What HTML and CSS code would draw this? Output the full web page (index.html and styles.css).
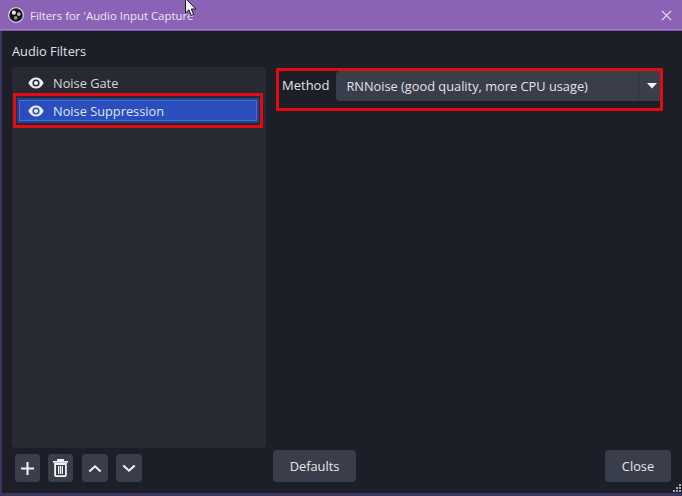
FILE: index.html
```html
<!DOCTYPE html>
<html lang="en">
<head>
<meta charset="utf-8">
<title>Filters</title>
<link rel="stylesheet" href="styles.css">
</head>
<body>
<div class="window">
  <header class="titlebar">
    <svg class="app-logo" viewBox="0 0 18 18"><circle cx="9" cy="9" r="8.2" fill="#15131a" stroke="#e8e4ee" stroke-width="1.2"/><circle cx="6.6" cy="6.400" r="2.400" fill="#e8e4ee"/><circle cx="12.200" cy="8" r="2.100" fill="#b9b4c0"/><circle cx="8.600" cy="12.200" r="2.100" fill="#8f8a96"/></svg>
    <span class="title">Filters for 'Audio Input Capture</span>
    <svg class="win-close" viewBox="0 0 12 12"><path d="M1 1l10 10M11 1L1 11" stroke="#e9e2f3" stroke-width="1.400" fill="none"/></svg>
  </header>
  <main class="content">
    <section class="left">
      <div class="group-label">Audio Filters</div>
      <div class="list">
        <div class="item">
          <svg class="eye" viewBox="0 0 16 12"><path d="M0.300 6C2.400 2.200 5 0.500 8 0.500S13.600 2.200 15.700 6C13.600 9.800 11 11.500 8 11.500S2.400 9.800 0.300 6Z" fill="#eceef2"/><circle cx="8" cy="6" r="3.600" fill="#272a33"/><circle cx="8" cy="6" r="2.100" fill="#eceef2"/></svg>
          <span>Noise Gate</span>
        </div>
        <div class="highlight">
          <div class="item selected">
            <svg class="eye" viewBox="0 0 16 12"><path d="M0.300 6C2.400 2.200 5 0.500 8 0.500S13.600 2.200 15.700 6C13.600 9.800 11 11.500 8 11.500S2.400 9.800 0.300 6Z" fill="#eceef2"/><circle cx="8" cy="6" r="3.600" fill="#2a4fbd"/><circle cx="8" cy="6" r="2.100" fill="#eceef2"/></svg>
            <span>Noise Suppression</span>
          </div>
        </div>
      </div>
      <div class="tools">
        <button class="tool tool-add"><svg viewBox="0 0 16 16"><path d="M8 1v14M1 8h14" stroke="#f2f2f4" stroke-width="2.200" fill="none"/></svg></button>
        <button class="tool tool-del"><svg viewBox="0 0 16 18"><path d="M0.500 2.800h15M5.500 2.800V1h5v1.800" stroke="#f2f2f4" stroke-width="1.800" fill="none"/><path d="M2.600 5h10.800v11a1.200 1.200 0 0 1-1.200 1.200H3.800a1.200 1.200 0 0 1-1.200-1.200Z" stroke="#f2f2f4" stroke-width="1.800" fill="none"/><path d="M6.100 7v8M8 7v8M9.900 7v8" stroke="#f2f2f4" stroke-width="1.200" fill="none"/></svg></button>
        <button class="tool tool-up"><svg viewBox="0 0 16 10"><path d="M1.500 8.500L8 2.500l6.500 6" stroke="#f2f2f4" stroke-width="2.400" fill="none"/></svg></button>
        <button class="tool tool-down"><svg viewBox="0 0 16 10"><path d="M1.500 1.500L8 7.500l6.500-6" stroke="#f2f2f4" stroke-width="2.400" fill="none"/></svg></button>
      </div>
    </section>
    <section class="right">
      <div class="method-row">
        <span class="method-label">Method</span>
        <div class="combo">
          <span class="combo-text">RNNoise (good quality, more CPU usage)</span>
          <span class="combo-arrow"><svg viewBox="0 0 10 6"><path d="M0 0h10L5 5.500Z" fill="#f2f2f4"/></svg></span>
        </div>
      </div>
      <div class="actions">
        <button class="btn">Defaults</button>
        <button class="btn btn-close">Close</button>
      </div>
    </section>
  </main>
  <svg class="grip" viewBox="0 0 9 9"><path d="M6 0h2v2H6zM3 3h2v2H3zM6 3h2v2H6zM0 6h2v2H0zM3 6h2v2H3zM6 6h2v2H6z" fill="#a9abb2"/></svg>
  <svg class="cursor" viewBox="0 0 12 19"><path d="M0.500 0.500V15l3.400-3.200 2.300 5.600 2.500-1-2.400-5.400h4.600Z" fill="#f4f4f6" stroke="#17151c" stroke-width="1"/></svg>
</div>
</body>
</html>
```

FILE: styles.css
```css
* { box-sizing: border-box; }
html, body { margin: 0; padding: 0; }
body { width: 682px; height: 496px; overflow: hidden; background: #1c1f27; font-family: "Open Sans", "Noto Sans", sans-serif; font-size: 12.800px; color: #e6e7ea; }
.window { position: relative; width: 682px; height: 496px; display: flex; flex-direction: column; background: #1c1f27; border-left: 2px solid #3d3560; border-bottom: 3px solid #3d3560; }
.titlebar { height: 31px; margin-left: -2px; flex: none; display: flex; align-items: center; padding: 0 10px 0 8px; background: #8b63b6; border-bottom: 1px solid #8159ad; box-shadow: inset 0 -3px 0 -2px #a07cc6; color: #ece6f3; font-size: 11.400px; }
.app-logo { width: 16px; height: 16px; margin-right: 6px; margin-top: -1px; }
.title { flex: 1; }
.win-close { width: 11px; height: 11px; }
.content { flex: 1; display: flex; padding: 0 11px 11px 10px; gap: 7px; min-height: 0; }
.left { width: 254px; display: flex; flex-direction: column; flex: none; }
.group-label { height: 36px; padding-top: 12px; line-height: 17px; color: #dfe0e4; }
.list { flex: 1; background: #272a33; border-radius: 4px; padding-top: 5px; }
.item { display: flex; align-items: center; height: 21px; padding-left: 16px; gap: 9px; color: #d6d7db; }
.eye { width: 16px; height: 12px; flex: none; }
.highlight { margin: 0 3px 0 1px; height: 35px; border: 3px solid #e40a12; padding: 2px 1px; }
.selected { height: 25px; padding-left: 11px; background: #2a4fbd; box-shadow: inset 2px 2px 0 #243f96, inset -2px -2px 0 #243f96, inset 3px 3px 0 #4a6ccd, inset -3px -3px 0 #4a6ccd; color: #dfe4f4; }
.tools { height: 34px; flex: none; display: flex; align-items: flex-end; padding-left: 3px; gap: 8px; }
.tool { width: 25px; height: 28px; padding: 0; border: 0; border-radius: 4px; background: #3a3d4a; display: flex; align-items: center; justify-content: center; }
.tool-up, .tool-down { width: 26px; }
.tool-up { margin-left: 1px; }
.tool-add svg { width: 15px; height: 15px; }
.tool-del svg { width: 17px; height: 18px; }
.tool-up svg, .tool-down svg { width: 14px; height: 9px; }
.right { flex: 1; display: flex; flex-direction: column; justify-content: space-between; min-width: 0; }
.method-row { margin: 37px 8px 0 3px; height: 43px; border: 3px solid #e40a12; border-radius: 1px; display: flex; align-items: flex-start; padding-left: 3px; gap: 7px; }
.method-label { height: 28px; line-height: 28px; color: #e2e3e6; font-size: 13px; }
.combo { flex: 1; height: 30px; display: flex; align-items: center; background: #3a3d4a; border-radius: 4px 0 0 4px; }
.combo-text { flex: 1; padding-left: 10px; color: #e2e3e6; }
.combo-arrow { width: 22px; height: 30px; padding-left: 4px; border-left: 1px solid #30333e; display: flex; align-items: center; justify-content: center; }
.combo-arrow svg { width: 10px; height: 6px; }
.actions { display: flex; justify-content: space-between; }
.btn { height: 32px; width: 83px; padding: 0; border: 0; border-radius: 4px; background: #3a3d4a; color: #e6e7ea; font: inherit; }
.btn-close { width: 66px; }
.grip { position: absolute; right: 0; bottom: 0; width: 9px; height: 9px; }
.cursor { position: absolute; left: 183px; top: -2px; width: 12px; height: 19px; }
```
